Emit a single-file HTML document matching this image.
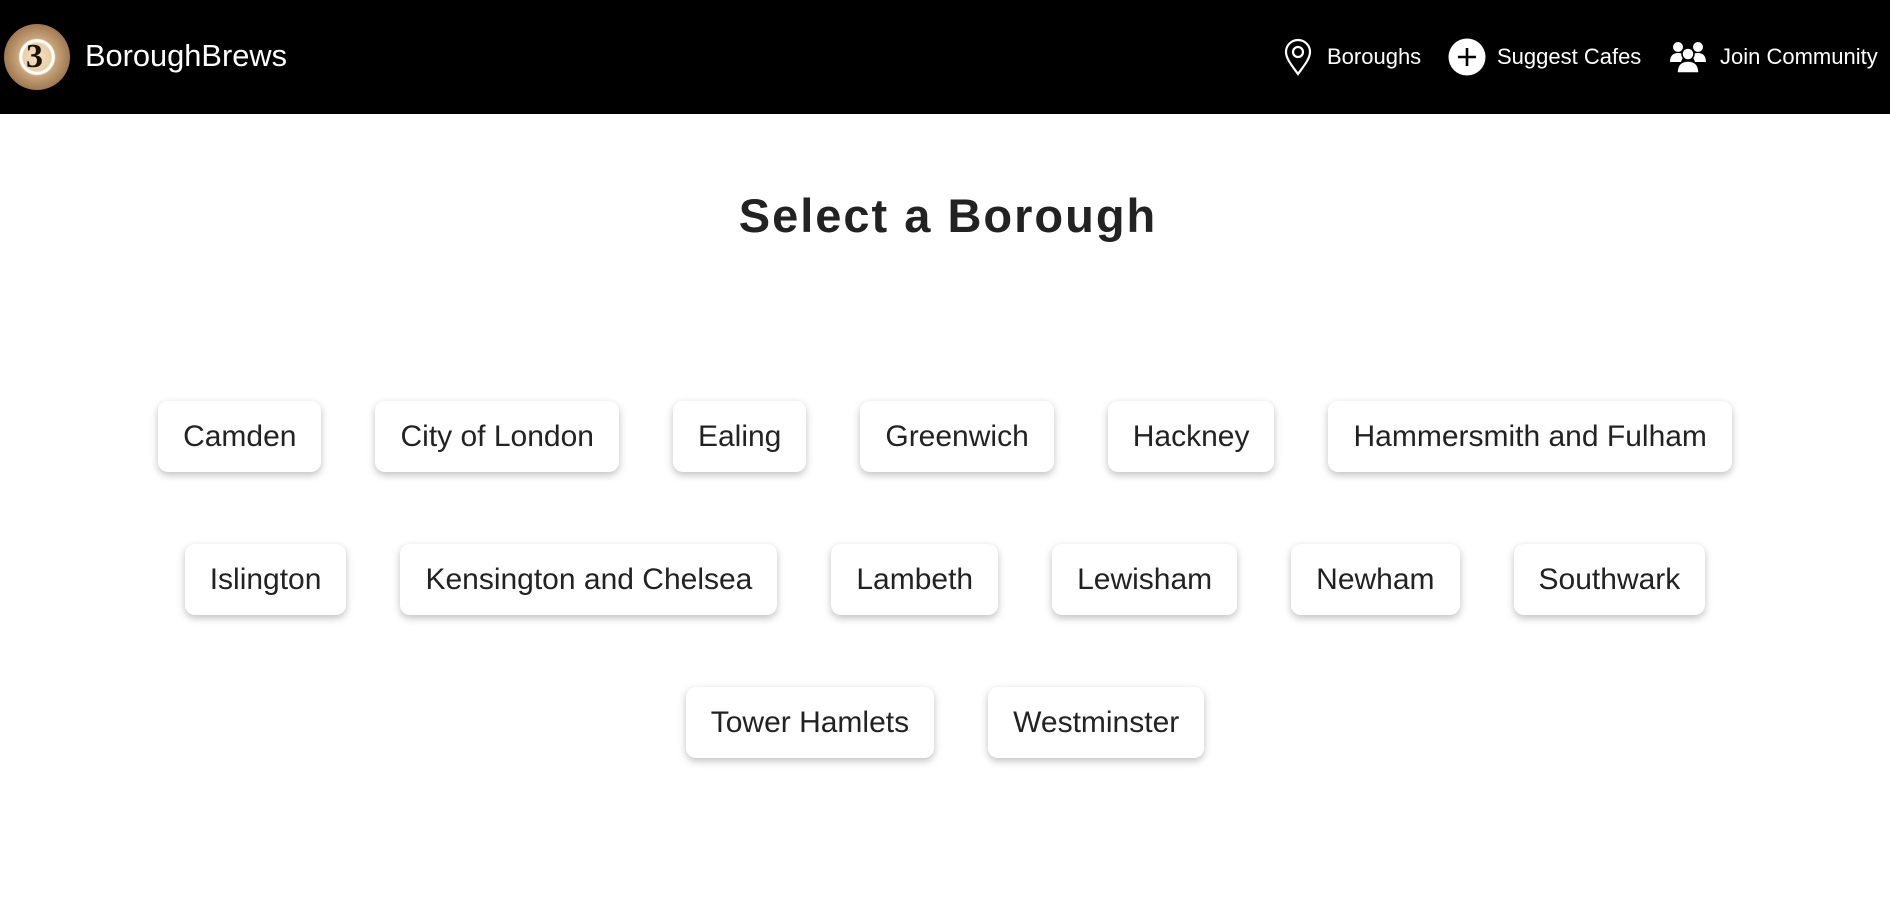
<!DOCTYPE html>
<html><head><meta charset="utf-8"><style>
*{margin:0;padding:0;box-sizing:border-box}
body{width:1890px;height:911px;background:#fff;font-family:"Liberation Sans",Arial,sans-serif;overflow:hidden;position:relative}
.hdr{position:absolute;left:0;top:0;width:1890px;height:114px;background:#000}
.logo{position:absolute;left:4px;top:24px;width:66px;height:66px;border-radius:50%;background:radial-gradient(circle at 50% 50%,#f4e2c4 0,#e8cfa6 30%,#fff 33%,#fff 37%,#c9a57a 40%,#a07a52 70%,#3a2a1a 92%,#111 100%)}
.logo span{position:absolute;left:22px;top:14px;font:bold 34px "Liberation Serif",serif;color:#1a120a}
.brand{position:absolute;left:85px;top:37px;color:#fff;font-size:30.8px;line-height:38px}
.nav{position:absolute;top:40px;color:#fff;font-size:22px;line-height:34px}
h1{position:absolute;top:187px;left:3px;width:1890px;text-align:center;font-size:47px;font-weight:bold;letter-spacing:2px;color:#222;line-height:58px}
.row{position:absolute;left:0;width:1890px;display:flex;justify-content:center;gap:54px}
.b{height:71px;padding:0 25px;background:#fff;border-radius:10px;box-shadow:0 3px 8px rgba(0,0,0,.25);font-size:30px;color:#222;line-height:71px;white-space:nowrap}
</style></head><body>
<div class="hdr">
<div class="logo"><span>3</span></div>
<div class="brand">BoroughBrews</div>
<svg style="position:absolute;left:1284px;top:38px" width="28" height="38" viewBox="0 0 28 38"><path d="M14 36 C9 29 2 21 2 14 A12 12 0 0 1 26 14 C26 21 19 29 14 36Z" fill="none" stroke="#fff" stroke-width="2.2"/><circle cx="14" cy="14" r="5" fill="none" stroke="#fff" stroke-width="2.2"/></svg>
<div class="nav" style="left:1327px">Boroughs</div>
<svg style="position:absolute;left:1448px;top:38px" width="38" height="38" viewBox="0 0 38 38"><circle cx="19" cy="19" r="18.5" fill="#fff"/><path d="M19 10V28M10 19H28" stroke="#000" stroke-width="2.6"/></svg>
<div class="nav" style="left:1497px">Suggest Cafes</div>
<svg style="position:absolute;left:1669px;top:40px" width="38" height="34" viewBox="0 0 38 34"><circle cx="9" cy="7" r="5" fill="#fff"/><circle cx="29" cy="7" r="5" fill="#fff"/><path d="M1 22c0-6 3-9 8-9s6 2 6 2l-3 7z M37 22c0-6-3-9-8-9s-6 2-6 2l3 7z" fill="#fff"/><circle cx="19" cy="14" r="6" fill="#fff" stroke="#000" stroke-width="1.5"/><path d="M8 33c0-8 4-12 11-12s11 4 11 12z" fill="#fff" stroke="#000" stroke-width="1.5"/></svg>
<div class="nav" style="left:1720px">Join Community</div>
</div>
<h1>Select a Borough</h1>
<div class="row" style="top:401px"><div class="b">Camden</div><div class="b">City of London</div><div class="b">Ealing</div><div class="b">Greenwich</div><div class="b">Hackney</div><div class="b">Hammersmith and Fulham</div></div>
<div class="row" style="top:544px"><div class="b">Islington</div><div class="b">Kensington and Chelsea</div><div class="b">Lambeth</div><div class="b">Lewisham</div><div class="b">Newham</div><div class="b">Southwark</div></div>
<div class="row" style="top:687px"><div class="b">Tower Hamlets</div><div class="b">Westminster</div></div>
</body></html>
